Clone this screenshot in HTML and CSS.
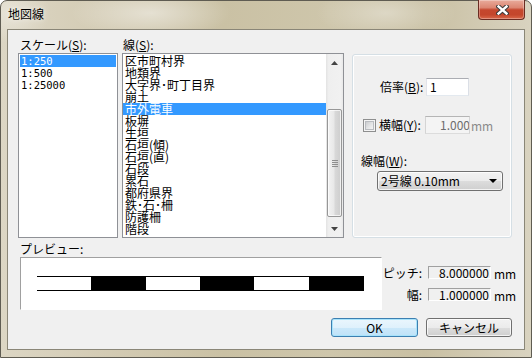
FILE: index.html
```html
<!DOCTYPE html>
<html lang="ja">
<head>
<meta charset="utf-8">
<title>地図線</title>
<link rel="stylesheet" href="styles.css">
</head>
<body>
<div class="window">
  <div class="titlebar">
    <span class="title">地図線</span>
    <div class="close">
      <svg width="13" height="10" viewBox="0 0 13 10"><path d="M2.5 1.5 L10.5 8.5 M10.5 1.5 L2.5 8.5" stroke="#3a3a3a" stroke-width="4.4" stroke-linecap="square" fill="none"/><path d="M2.5 1.5 L10.5 8.5 M10.5 1.5 L2.5 8.5" stroke="#fff" stroke-width="2.4" stroke-linecap="square" fill="none"/></svg>
    </div>
  </div>
  <div class="client">
    <div class="top">
      <div class="scale-col">
        <div class="label">スケール(<u>S</u>):</div>
        <div class="listbox scale-list">
          <div class="item sel">1:250</div>
          <div class="item">1:500</div>
          <div class="item">1:25000</div>
        </div>
      </div>
      <div class="line-col">
        <div class="label">線(<u>S</u>):</div>
        <div class="listbox line-list">
          <div class="items">
            <div class="item">区市町村界</div>
            <div class="item">地類界</div>
            <div class="item">大字界･町丁目界</div>
            <div class="item">崩土</div>
            <div class="item sel">市外電車</div>
            <div class="item">板塀</div>
            <div class="item">生垣</div>
            <div class="item">石垣(傾)</div>
            <div class="item">石垣(直)</div>
            <div class="item">石段</div>
            <div class="item">累石</div>
            <div class="item">都府県界</div>
            <div class="item">鉄･石･柵</div>
            <div class="item">防護柵</div>
            <div class="item">階段</div>
          </div>
          <div class="vscroll">
            <div class="sb-btn"><svg width="7" height="4" viewBox="0 0 7 4"><polygon points="3.5,0 7,4 0,4" fill="#444"/></svg></div>
            <div class="sb-track">
              <div class="thumb"><div class="grip"></div></div>
            </div>
            <div class="sb-btn"><svg width="7" height="4" viewBox="0 0 7 4"><polygon points="0,0 7,0 3.5,4" fill="#444"/></svg></div>
          </div>
        </div>
      </div>
      <div class="group">
        <div class="row row-rate">
          <span class="flabel w46">倍率(<u>B</u>):</span>
          <div class="edit rate">1</div>
        </div>
        <div class="row row-width">
          <span class="chk"><span class="chk-in"></span></span>
          <span class="flabel w46">横幅(<u>Y</u>):</span>
          <div class="edit disabled">1.000000</div>
          <span class="unit-dis">mm</span>
        </div>
        <div class="label lw">線幅(<u>W</u>):</div>
        <div class="combo">
          <span>2号線 0.10mm</span>
          <svg width="8" height="4" viewBox="0 0 8 4"><polygon points="0,0 8,0 4,4" fill="#000"/></svg>
        </div>
      </div>
    </div>
    <div class="bottom">
      <div class="preview-col">
        <div class="label pl">プレビュー:</div>
        <div class="preview">
          <div class="dash">
            <span class="seg w" style="width:54px"></span>
            <span class="seg b" style="width:55px"></span>
            <span class="seg w" style="width:54px"></span>
            <span class="seg b" style="width:54px"></span>
            <span class="seg w" style="width:55px"></span>
            <span class="seg b" style="width:55px"></span>
          </div>
        </div>
      </div>
      <div class="fields">
        <div class="frow">
          <span class="flabel r">ピッチ:</span>
          <span class="static">8.000000</span>
          <span class="unit">mm</span>
        </div>
        <div class="frow">
          <span class="flabel r">幅:</span>
          <span class="static">1.000000</span>
          <span class="unit">mm</span>
        </div>
      </div>
    </div>
    <div class="buttons">
      <div class="btn ok">OK</div>
      <div class="btn cancel">キャンセル</div>
    </div>
  </div>
</div>
</body>
</html>
```

FILE: styles.css
```css
* { box-sizing: border-box; }
html, body { margin: 0; padding: 0; }
body {
  width: 532px;
  height: 358px;
  overflow: hidden;
  background: #fff;
  font-family: "Noto Sans CJK JP", "Noto Sans", sans-serif;
  font-size: 12px;
  color: #000;
}
u { text-decoration: underline; text-underline-offset: 1px; }

.window {
  width: 532px;
  height: 358px;
  border: 1px solid #5f5c52;
  border-radius: 7px 7px 0 0;
  display: flex;
  flex-direction: column;
  background:
    radial-gradient(ellipse 80px 26px at 150px 12px, rgba(255,255,255,0.45), rgba(255,255,255,0)),
    radial-gradient(ellipse 70px 26px at 385px 12px, rgba(255,255,255,0.35), rgba(255,255,255,0)),
    radial-gradient(ellipse 40px 30px at 10px 12px, rgba(255,255,255,0.35), rgba(255,255,255,0)),
    linear-gradient(90deg, #dcd6c4 0%, #d4ccb5 18%, #cac1a4 42%, #cec6ab 62%, #c9c0a3 80%, #d9d3c0 100%);
}

.titlebar {
  height: 28px;
  display: flex;
  align-items: flex-start;
}
.title {
  flex: 1;
  padding: 4px 0 0 7px;
  line-height: 17px;
  font-size: 12px;
  text-shadow: 0 0 5px rgba(255,255,255,0.8);
}
.close {
  width: 47px;
  height: 20px;
  margin: -1px 6px 0 0;
  border: 1px solid #6a2c22;
  border-top: none;
  border-radius: 0 0 4px 4px;
  background: linear-gradient(#e9ab9b 0%, #dc8672 40%, #c5472e 52%, #c4462c 78%, #d9694b 100%);
  box-shadow: inset 0 0 0 1px rgba(255,255,255,0.3);
  display: flex;
  align-items: center;
  justify-content: center;
  padding-left: 2px;
}

.client {
  flex: 1;
  margin: 0 6px 7px 6px;
  border: 1px solid #8a8677;
  background: #f0f0f0;
  padding: 7px 12px 0 10px;
  display: flex;
  flex-direction: column;
}

.top { display: flex; }
.label { height: 16px; line-height: 16px; white-space: nowrap; }
.scale-col { width: 100px; }
.scale-col .label { padding-left: 2px; }
.line-col { width: 222px; margin-left: 4px; }
.line-col .label { padding-left: 1px; }

.listbox {
  height: 185px;
  border: 1px solid #8f9196;
  background: #fff;
}
.item {
  height: 12px;
  line-height: 12px;
  white-space: nowrap;
}
.item.sel { background: #3399ff; color: #fff; }

.scale-list { padding: 1px; }
.scale-list .item {
  padding-left: 1px;
  font-family: "DejaVu Sans Mono", "Liberation Mono", monospace;
  font-size: 10.5px;
}

.line-list { display: flex; }
.items { width: 203px; padding-top: 1px; }
.items .item { padding-left: 2px; }

.vscroll {
  width: 17px;
  display: flex;
  flex-direction: column;
  background: linear-gradient(90deg, #e3e3e3 0%, #efefef 15%, #f1f1f1 85%, #e9e9e9 100%);
}
.sb-btn {
  height: 17px;
  display: flex;
  align-items: center;
  justify-content: center;
}
.sb-track { flex: 1; padding: 38px 1px 0 1px; }
.thumb {
  height: 108px;
  border: 1px solid #979797;
  border-radius: 2px;
  background: linear-gradient(90deg, #f3f3f3 0%, #e8e8e8 45%, #d8d8d8 55%, #cdcdcd 100%);
  box-shadow: inset 0 0 0 1px rgba(255,255,255,0.7);
  display: flex;
  align-items: center;
  justify-content: center;
}
.grip {
  width: 6px;
  height: 7px;
  background: repeating-linear-gradient(#8e8e8e 0 1px, transparent 1px 2px);
}

.group {
  width: 160px;
  height: 184px;
  margin: 17px 0 0 8px;
  border: 1px solid #d5dfe5;
  border-radius: 3px;
  box-shadow: inset 0 0 0 1px #fff;
  display: flex;
  flex-direction: column;
}
.row { display: flex; align-items: center; height: 18px; }
.row-rate { margin-top: 23px; padding-left: 27px; }
.row-width { margin-top: 20px; padding-left: 10px; }
.flabel { white-space: nowrap; line-height: 16px; }
.w46 { width: 46px; }
.row-width .flabel { margin-left: 3px; }

.edit {
  height: 18px;
  line-height: 16px;
  border: 1px solid;
  border-color: #abadb3 #dbdfe6 #e3e9ef #e2e3ea;
  background: #fff;
  padding-left: 3px;
  white-space: nowrap;
  overflow: hidden;
}
.edit.rate { width: 43px; }
.edit.disabled {
  width: 45px;
  background: #f4f4f4;
  border-color: #b5b5b5 #d4d4d4 #dcdcdc #d4d4d4;
  color: #6d6d6d;
  padding-left: 14px;
}
.unit-dis { color: #8a8a8a; margin-left: 1px; line-height: 16px; padding-top: 2px; }

.chk {
  width: 13px;
  height: 13px;
  border: 1px solid #8e8f8f;
  background: #f4f4f4;
  padding: 1px;
  display: block;
}
.chk-in {
  display: block;
  width: 9px;
  height: 9px;
  border: 1px solid #b9bcc0;
  background: linear-gradient(135deg, #cbcdd0 0%, #e6e7e8 60%, #f4f4f4 100%);
}

.lw { margin-top: 19px; padding-left: 8px; }
.combo {
  width: 126px;
  height: 20px;
  margin: 2px 0 0 24px;
  border: 1px solid #707070;
  border-radius: 3px;
  background: linear-gradient(#f2f2f2 0%, #ebebeb 50%, #dddddd 50%, #cfcfcf 100%);
  box-shadow: inset 0 0 0 1px rgba(255,255,255,0.75);
  display: flex;
  align-items: center;
  justify-content: space-between;
  padding: 0 5px 0 3px;
  line-height: 16px;
  white-space: nowrap;
}

.bottom { display: flex; margin-top: 3px; }
.preview-col { width: 364px; }
.pl { padding-left: 2px; }
.preview {
  width: 362px;
  height: 53px;
  margin-left: 2px;
  border: 1px solid;
  border-color: #a0a0a0 #ffffff #ffffff #a0a0a0;
  background: #fff;
  padding: 18px 0 0 16px;
}
.dash { display: flex; height: 15px; }
.seg { display: block; height: 15px; }
.seg.w { background: #fff; border-top: 1px solid #000; border-bottom: 1px solid #000; }
.seg.b { background: #000; }

.fields { padding-top: 25px; }
.frow { display: flex; align-items: center; height: 13px; }
.frow + .frow { margin-top: 9px; }
.flabel.r { width: 40px; text-align: right; }
.static {
  width: 63px;
  height: 13px;
  margin-left: 6px;
  border: 1px solid;
  border-color: #a0a0a0 #ffffff #ffffff #a0a0a0;
  text-align: right;
  padding-right: 1px;
  line-height: 12px;
}
.unit { margin-left: 3px; line-height: 13px; padding-top: 2px; }

.buttons {
  display: flex;
  justify-content: flex-end;
  margin-top: 8px;
}
.btn {
  height: 19px;
  line-height: 17px;
  text-align: center;
  border-radius: 3px;
  border: 1px solid #707070;
}
.ok {
  width: 87px;
  border-color: #3c7fb1;
  background: linear-gradient(#eaf6fd 0%, #dff1fc 50%, #cbe8fa 52%, #bfe2f8 100%);
  box-shadow: inset 0 0 0 1px #a8e3fb;
}
.cancel {
  width: 86px;
  margin-left: 8px;
  background: linear-gradient(#f2f2f2 0%, #ebebeb 50%, #dddddd 52%, #cfcfcf 100%);
  box-shadow: inset 0 0 0 1px rgba(255,255,255,0.75);
}
```
